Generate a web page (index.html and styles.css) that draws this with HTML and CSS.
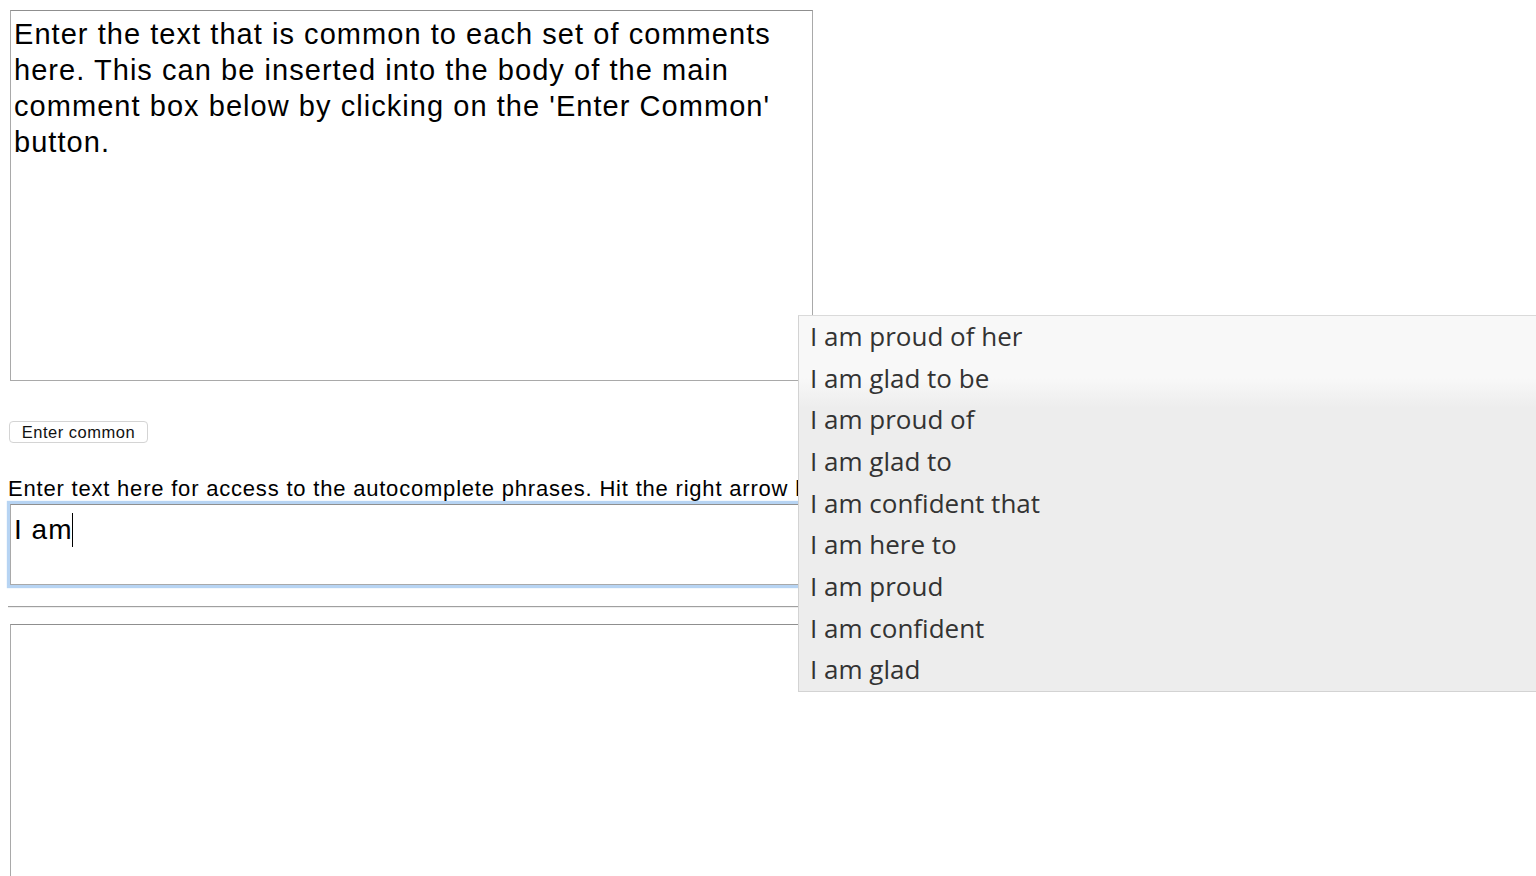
FILE: index.html
```html
<!DOCTYPE html>
<html>
<head>
<meta charset="utf-8">
<link rel="stylesheet" href="styles.css">
</head>
<body>
<textarea class="box common-box">Enter the text that is common to each set of comments here. This can be inserted into the body of the main comment box below by clicking on the 'Enter Common' button.</textarea>
<div class="btn-row"><button class="btn">Enter common</button></div>
<div class="label">Enter text here for access to the autocomplete phrases. Hit the right arrow key to accept a phrase.</div>
<div class="box input-box"><span class="typed">I am</span><span class="caret"></span></div>
<hr class="rule">
<textarea class="box main-box"></textarea>
<ul class="menu">
  <li>I am proud of her</li>
  <li>I am glad to be</li>
  <li>I am proud of</li>
  <li>I am glad to</li>
  <li>I am confident that</li>
  <li>I am here to</li>
  <li>I am proud</li>
  <li>I am confident</li>
  <li>I am glad</li>
</ul>
</body>
</html>
```
FILE: styles.css
```css
html {
  margin: 0;
  padding: 0;
  background: #fff;
  height: 876px;
  overflow: hidden;
}
body {
  margin: 0;
  padding: 8px;
  font-family: "Liberation Sans", Arial, sans-serif;
  color: #000;
  position: relative;
}
.box {
  display: block;
  box-sizing: border-box;
  margin: 2px;
  width: 803px;
  border: 1px solid #a9a9a9;
  border-top-color: #8f8f8f;
  background: #fff;
  resize: none;
  font-family: "Liberation Sans", Arial, sans-serif;
  color: #000;
  outline: none;
}
.common-box {
  height: 371px;
  font-size: 29px;
  letter-spacing: 1.05px;
  line-height: 36px;
  padding: 5px 3px;
  overflow: hidden;
}
.btn-row {
  margin-top: 40px;
  height: 22px;
}
.btn {
  box-sizing: border-box;
  margin: 0 0 0 1px;
  width: 139px;
  height: 22px;
  padding: 0;
  border: 1px solid #d4d4d4;
  border-radius: 4px;
  background: #fff;
  font-family: "Liberation Sans", Arial, sans-serif;
  font-size: 16.5px;
  letter-spacing: 0.5px;
  color: #111;
  line-height: 20px;
}
.label {
  margin-top: 32px;
  font-size: 22px;
  letter-spacing: 0.8px;
  line-height: 27px;
  white-space: nowrap;
}
.input-box {
  width: 1600px;
  height: 81px;
  padding: 7px 3px;
  font-size: 28px;
  letter-spacing: 1px;
  line-height: 36px;
  box-shadow: 0 0 1px 3px #b7d4f3;
}
.caret {
  display: inline-block;
  width: 1px;
  height: 34px;
  background: #000;
  vertical-align: -8px;
  margin-left: 0;
}
.rule {
  margin: 21px 0 16px 0;
  height: 0;
  border: 0;
  border-top: 1px solid #a0a0a0;
  border-bottom: 1px solid #eeeeee;
}
.main-box {
  width: 1600px;
  height: 262px;
}
.menu {
  position: absolute;
  left: 798px;
  top: 315px;
  width: 750px;
  margin: 0;
  padding: 0;
  list-style: none;
  box-sizing: border-box;
  border: 1px solid #d3d3d3;
  border-top-color: #dadada;
  background: linear-gradient(#f8f8f8 0px, #f8f8f8 62px, #ededed 92px, #ededed 100%);
  font-family: "Open Sans", "DejaVu Sans", sans-serif;
  font-size: 26px;
  color: #333;
}
.menu li {
  height: 41.67px;
  line-height: 41.67px;
  padding-left: 11px;
  white-space: nowrap;
}
```
